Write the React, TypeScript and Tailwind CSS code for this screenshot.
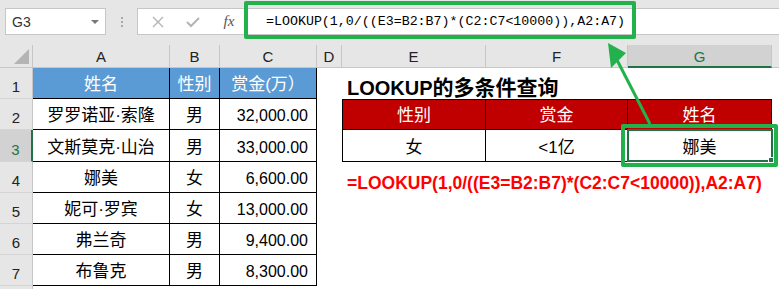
import React from 'react';

type Person = { name: string; sex: string; bounty: string };

const people: Person[] = [
  { name: '罗罗诺亚·索隆', sex: '男', bounty: '32,000.00' },
  { name: '文斯莫克·山治', sex: '男', bounty: '33,000.00' },
  { name: '娜美', sex: '女', bounty: '6,600.00' },
  { name: '妮可·罗宾', sex: '女', bounty: '13,000.00' },
  { name: '弗兰奇', sex: '男', bounty: '9,400.00' },
  { name: '布鲁克', sex: '男', bounty: '8,300.00' },
];

const formula = '=LOOKUP(1,0/((E3=B2:B7)*(C2:C7<10000)),A2:A7)';

const RowHead: React.FC<{ n: number; selected?: boolean }> = ({ n, selected }) => (
  <div
    className={
      selected
        ? 'flex items-end justify-center border-b border-r-2 border-b-[#d4d4d4] border-r-[#217346] bg-[#d2d2d2] pb-[4px] text-[15px] leading-none text-[#217346]'
        : 'flex items-end justify-center border-b border-r border-b-[#d4d4d4] border-r-[#c6c6c6] bg-[#e6e6e6] pb-[4px] text-[15px] leading-none text-[#222]'
    }
  >
    {n}
  </div>
);

const ColHead: React.FC<{ label: string; selected?: boolean }> = ({ label, selected }) => (
  <div
    className={
      selected
        ? 'flex items-end justify-center border-b-2 border-r border-b-[#217346] border-r-[#c6c6c6] bg-[#d2d2d2] pb-[2px] text-[15px] leading-none text-[#217346]'
        : 'flex items-end justify-center border-b border-r border-[#c6c6c6] bg-[#e6e6e6] pb-[3px] text-[15px] leading-none text-[#222]'
    }
  >
    {label}
  </div>
);

const Blank: React.FC<{ span?: boolean }> = ({ span }) => (
  <div className={span ? 'col-span-3 bg-white' : 'bg-white'} />
);

export default function App() {
  return (
    <div className="relative h-[289px] w-[779px] overflow-hidden bg-white font-['Liberation_Sans','Noto_Sans_CJK_SC',sans-serif]">
      {/* formula bar */}
      <div className="flex h-[45px] items-start bg-[#e6e6e6] pt-[8px]">
        <div className="ml-[5px] flex h-[27px] w-[101px] items-center justify-between border border-[#c6c6c6] bg-white pl-[6px] pr-[6px]">
          <span className="text-[14px] leading-none text-[#333]">G3</span>
          <span className="h-0 w-0 border-x-[4px] border-t-[4px] border-x-transparent border-t-[#777]" />
        </div>
        <div className="flex h-[27px] w-[31px] flex-col items-center justify-center gap-[2px]">
          <span className="h-[2px] w-[2px] bg-[#a8a8a8]" />
          <span className="h-[2px] w-[2px] bg-[#a8a8a8]" />
          <span className="h-[2px] w-[2px] bg-[#a8a8a8]" />
        </div>
        <div className="flex h-[27px] flex-1 items-center border-y border-l border-[#c6c6c6] bg-white">
          <div className="flex w-[40px] justify-center">
            <svg width="12" height="12" viewBox="0 0 12 12">
              <path d="M1 1 L11 11 M11 1 L1 11" stroke="#b4b4b4" strokeWidth="1.4" fill="none" />
            </svg>
          </div>
          <div className="flex w-[30px] justify-center">
            <svg width="14" height="12" viewBox="0 0 14 12">
              <path d="M1 6 L5 10 L13 2" stroke="#b4b4b4" strokeWidth="2" fill="none" />
            </svg>
          </div>
          <div className="flex w-[42px] justify-center font-['Liberation_Serif',serif] text-[15px] italic leading-none text-[#555]">
            fx
          </div>
          <div className="ml-[16px] font-['Liberation_Mono',monospace] text-[13.3px] leading-none text-black">
            {formula}
          </div>
        </div>
      </div>

      {/* sheet */}
      <div className="grid grid-cols-[33px_137px_50px_97px_25px_144px_142px_144px_7px] grid-rows-[23px_31px_31px_32px_31px_31px_31px_31px_3px]">
        {/* column headers */}
        <div className="relative border-b border-r border-[#c6c6c6] bg-[#e6e6e6]">
          <span className="absolute bottom-[3px] right-[3px] h-0 w-0 border-b-[15px] border-l-[15px] border-b-[#b4b4b4] border-l-transparent" />
        </div>
        <ColHead label="A" />
        <ColHead label="B" />
        <ColHead label="C" />
        <ColHead label="D" />
        <ColHead label="E" />
        <ColHead label="F" />
        <ColHead label="G" selected />
        <div className="border-b border-[#c6c6c6] bg-[#e6e6e6]" />

        {/* row 1 */}
        <RowHead n={1} />
        <div className="flex items-end justify-center border-b border-r border-black bg-[#5b9bd5] pb-[5px] text-[17px] leading-none text-white">姓名</div>
        <div className="flex items-end justify-center border-b border-r border-black bg-[#5b9bd5] pb-[5px] text-[17px] leading-none text-white">性别</div>
        <div className="flex items-end justify-center border-b border-r border-black bg-[#5b9bd5] pb-[5px] text-[17px] leading-none text-white">赏金(万）</div>
        <Blank />
        <div className="col-span-3 flex items-end bg-white pb-[1px] pl-[5px] font-bold leading-none text-black">
          <span className="text-[20px]">LOOKUP</span>
          <span className="text-[21px]">的多条件查询</span>
        </div>
        <Blank />

        {people.map((p, i) => {
          const row = i + 2;
          return (
            <React.Fragment key={p.name}>
              <RowHead n={row} selected={row === 3} />
              <div className="flex items-end justify-center border-b border-r border-black bg-white pb-[5px] text-[17px] leading-none text-black">{p.name}</div>
              <div className="flex items-end justify-center border-b border-r border-black bg-white pb-[5px] text-[17px] leading-none text-black">{p.sex}</div>
              <div className="flex items-end justify-end border-b border-r border-black bg-white pb-[5px] pr-[8px] text-[16px] leading-none text-black">{p.bounty}</div>
              <Blank />
              {row === 2 && (
                <>
                  <div className="flex items-end justify-center border border-black bg-[#c00000] pb-[5px] text-[17px] leading-none text-white">性别</div>
                  <div className="flex items-end justify-center border-y border-r border-black bg-[#c00000] pb-[5px] text-[17px] leading-none text-white">赏金</div>
                  <div className="flex items-end justify-center border-y border-r border-black bg-[#c00000] pb-[5px] text-[17px] leading-none text-white">姓名</div>
                </>
              )}
              {row === 3 && (
                <>
                  <div className="flex items-end justify-center border-x border-b border-black bg-white pb-[5px] text-[17px] leading-none text-black">女</div>
                  <div className="flex items-end justify-center border-b border-r border-black bg-white pb-[5px] text-[17px] leading-none text-black">{'<1亿'}</div>
                  <div className="flex items-end justify-center border-b border-r border-black bg-white pb-[5px] text-[17px] leading-none text-black">娜美</div>
                </>
              )}
              {row === 4 && (
                <div className="col-span-3 flex items-end bg-white pb-[1px] pl-[5px] text-[17.5px] font-bold leading-none text-[#ff0000]">
                  {formula}
                </div>
              )}
              {row > 4 && <Blank span />}
              <Blank />
            </React.Fragment>
          );
        })}

        {/* row 8, cut off */}
        <div className="border-r border-[#c6c6c6] bg-[#e6e6e6]" />
        <div className="col-span-8 bg-white" />
      </div>

      {/* annotations */}
      <div className="absolute left-[244px] top-[1px] h-[38px] w-[392px] rounded-[2px] border-4 border-[#22b14c]" />
      <div className="absolute left-[627px] top-[129px] h-[33px] w-[146px] border-2 border-[#217346]" />
      <div className="absolute left-[768px] top-[157px] h-[6px] w-[6px] border border-white bg-[#217346]" />
      <div className="absolute left-[621px] top-[124px] h-[43px] w-[157px] rounded-[2px] border-4 border-[#22b14c]" />
      <svg className="absolute left-0 top-0" width="779" height="289" viewBox="0 0 779 289">
        <line x1="650" y1="124" x2="617" y2="60" stroke="#22b14c" strokeWidth="3" />
        <polygon points="608,43 626,53 611,68" fill="#22b14c" />
      </svg>
    </div>
  );
}
